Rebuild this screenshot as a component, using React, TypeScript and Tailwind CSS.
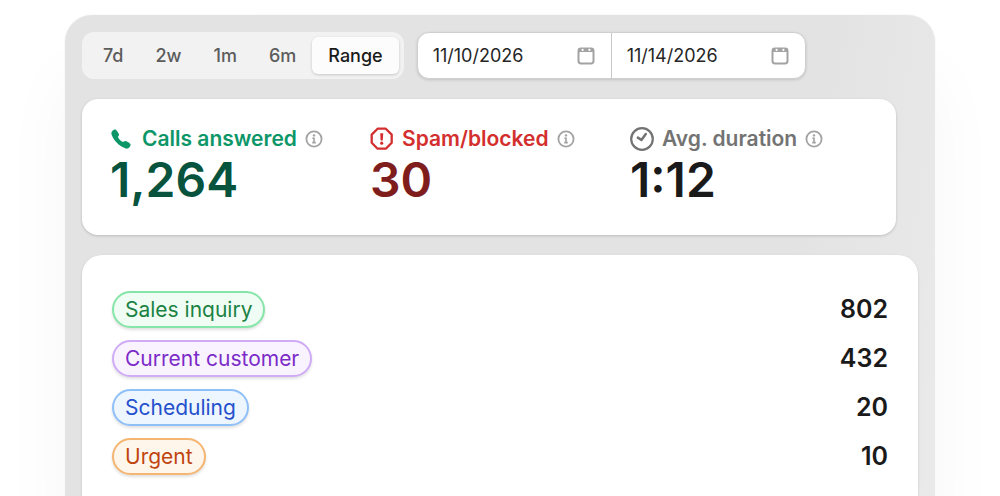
import React from 'react';
import { IoCall } from 'react-icons/io5';

const ranges = ['7d', '2w', '1m', '6m', 'Range'];

const dates = [
  { id: 'start', label: 'Start date', value: '11/10/2026' },
  { id: 'end', label: 'End date', value: '11/14/2026' }
];

const stats = [
  {
    label: 'Calls answered',
    value: '1,264',
    icon: <IoCall className="mr-0.5 h-[22px] w-[22px]" />,
    labelColor: 'text-[#0d9668]',
    valueColor: 'text-[#07533d]'
  },
  {
    label: 'Spam/blocked',
    value: '30',
    icon: <AlertIcon />,
    labelColor: 'text-[#d32f2f]',
    valueColor: 'text-[#7f1d1d]'
  },
  {
    label: 'Avg. duration',
    value: '1:12',
    icon: <ClockIcon />,
    labelColor: 'text-[#737373]',
    valueColor: 'text-[#1a1a1a]'
  }
];

const categories = [
  { name: 'Sales inquiry', count: 802, color: 'bg-green-50 border-[#86e5a8] text-[#1b8244]' },
  { name: 'Current customer', count: 432, color: 'bg-[#f9f3ff] border-[#d0acf6] text-[#7c2bc8]' },
  { name: 'Scheduling', count: 20, color: 'bg-[#edf5ff] border-[#90c0f8] text-[#2450cc]' },
  { name: 'Urgent', count: 10, color: 'bg-[#fff6eb] border-[#f5b673] text-[#c04410]' }
];

function AlertIcon() {
  return (
    <svg className="h-6 w-6" viewBox="0 0 24 24" fill="none" stroke="currentColor" strokeLinejoin="round">
      <path d="M7.6 1.7h8.2l5.9 5.9v8.2l-5.9 5.9H7.6l-5.9-5.9V7.6z" strokeWidth="2.3" />
      <path d="M10.2 6.2h3l-.4 7.2h-2.2z" fill="currentColor" stroke="none" />
      <circle cx="11.7" cy="16.2" r="1.6" fill="currentColor" stroke="none" />
    </svg>
  );
}

function ClockIcon() {
  return (
    <svg className="h-6 w-6" viewBox="0 0 24 24" fill="none" stroke="currentColor" strokeLinecap="round" strokeLinejoin="round">
      <circle cx="12" cy="12" r="10.8" strokeWidth="2.2" />
      <path d="M7.9 10.6l3.5 2.4 4.4-6" strokeWidth="2.5" />
    </svg>
  );
}

function InfoIcon() {
  return (
    <svg className="h-[18px] w-[18px]" viewBox="0 0 18 18" fill="none" stroke="currentColor">
      <circle cx="9" cy="9" r="7.6" strokeWidth="1.8" />
      <circle cx="9" cy="5.4" r="1.2" fill="currentColor" stroke="none" />
      <path d="M7.3 8.2H9v4.2M7.2 12.6h3.6" strokeWidth="1.6" />
    </svg>
  );
}

function CalendarIcon() {
  return (
    <svg className="h-[18px] w-[18px]" viewBox="0 0 18 18" fill="none">
      <rect x="1.5" y="1.5" width="15" height="15" rx="2.4" stroke="currentColor" strokeWidth="2" />
      <path d="M1.5 5V3.5a2 2 0 0 1 2-2h11a2 2 0 0 1 2 2V5z" fill="currentColor" />
      <circle cx="5.6" cy="2.9" r="1.1" fill="white" />
      <circle cx="12.4" cy="2.9" r="1.1" fill="white" />
    </svg>
  );
}

const RangePicker = () => (
  <div className="flex rounded-xl bg-[#f2f2f2] p-[5px]">
    {ranges.map(range => (
      <button
        key={range}
        type="button"
        aria-pressed={range === 'Range'}
        className={
          range === 'Range'
            ? 'h-[37px] rounded-md bg-[#fcfcfc] px-4 text-lg font-medium text-[#1a1a1a] shadow-[0_1px_3px_rgba(0,0,0,0.18)]'
            : 'h-[37px] px-4 text-lg font-medium text-[#5c5c5c]'
        }
      >
        {range}
      </button>
    ))}
  </div>
);

const DateFields = () => (
  <div className="flex w-[389px] divide-x divide-[#c8c8c8] rounded-xl border border-[#cfcfcf] bg-white shadow-[0_1px_3px_rgba(0,0,0,0.15)]">
    {dates.map(date => (
      <div key={date.id} className="flex min-w-0 flex-1 items-center pl-[15px] pr-4">
        <input
          id={date.id}
          type="text"
          aria-label={date.label}
          defaultValue={date.value}
          className="w-full min-w-0 bg-transparent text-lg text-[#262626] outline-none"
        />
        <button type="button" aria-label={`Pick ${date.label.toLowerCase()}`} className="shrink-0 text-[#a3a3a3]">
          <CalendarIcon />
        </button>
      </div>
    ))}
  </div>
);

export default function App() {
  return (
    <div className="flex min-h-screen flex-col overflow-hidden bg-white px-16 pt-[14px] font-[Inter,sans-serif]">
      <main className="flex flex-1 flex-col gap-5 rounded-t-[28px] border border-b-0 border-white/80 bg-linear-[100deg] from-[#e3e3e3] from-80% to-[#eaeaea] bg-origin-border px-[17px] pt-[17px] shadow-[0_60px_70px_rgba(0,0,0,0.04)]">
        <div className="flex gap-[13px]">
          <RangePicker />
          <DateFields />
        </div>

        <dl className="mr-[22px] flex h-[136px] rounded-2xl bg-white pl-7 pr-1.5 pt-7 shadow-[0_1px_3px_rgba(0,0,0,0.18)]">
          {stats.map(stat => (
            <div key={stat.label} className="flex-1">
              <dt className={`flex h-6 items-center text-[21px] font-semibold ${stat.labelColor}`}>
                {stat.icon}
                <span className="ml-2">{stat.label}</span>
                <button type="button" aria-label={`About ${stat.label}`} className="ml-2 text-[#a3a3a3]">
                  <InfoIcon />
                </button>
              </dt>
              <dd className={`text-5xl font-semibold leading-[58px] ${stat.valueColor}`}>{stat.value}</dd>
            </div>
          ))}
        </dl>

        <section className="flex-1 rounded-t-[20px] bg-white px-[30px] pt-[30px] shadow-[0_1px_3px_rgba(0,0,0,0.12)]">
          <table className="w-full">
            <tbody>
              {categories.map(category => (
                <tr key={category.name} className="h-[49px]">
                  <th scope="row" className="p-0 text-left font-normal">
                    <span
                      className={`inline-flex h-[37px] items-center rounded-full border-2 px-[11px] align-middle text-[21px] shadow-[0_2px_3px_rgba(0,0,0,0.12)] ${category.color}`}
                    >
                      {category.name}
                    </span>
                  </th>
                  <td className="p-0 text-right text-[25px] font-semibold text-[#1a1a1a]">{category.count}</td>
                </tr>
              ))}
            </tbody>
          </table>
        </section>
      </main>
    </div>
  );
}
